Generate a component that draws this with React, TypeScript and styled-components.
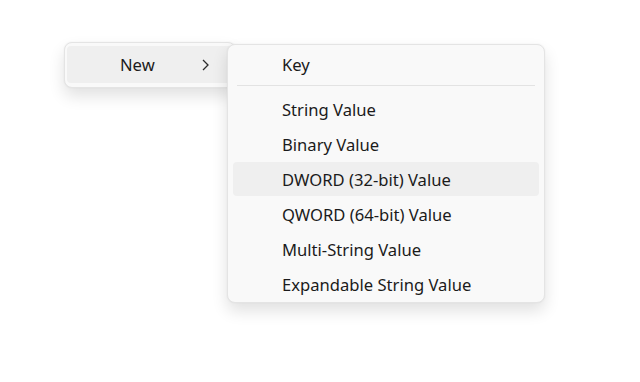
import React from 'react';
import styled, { createGlobalStyle } from 'styled-components';

const GlobalStyle = createGlobalStyle`
  html, body {
    margin: 0;
    padding: 0;
    background: #ffffff;
  }
  body {
    font-family: 'Noto Sans', 'Open Sans', sans-serif;
    color: #1b1b1b;
  }
`;

const Canvas = styled.div`
  width: 640px;
  height: 382px;
  padding: 42px 0 0 64px;
  box-sizing: border-box;
  background: #ffffff;
`;

const Menu = styled.div`
  position: relative;
  box-sizing: border-box;
  background: #f9f9f9;
  border: 1px solid #e4e4e4;
  border-radius: 8px;
  box-shadow: 0 8px 16px rgba(0, 0, 0, 0.12), 0 0 2px rgba(0, 0, 0, 0.06);
`;

const ParentMenu = styled(Menu)`
  width: 172px;
  padding: 3px 2px;
`;

const SubMenu = styled(Menu)`
  position: absolute;
  left: 162px;
  top: 1px;
  width: 318px;
  height: 259px;
  padding: 2px 5px 0;
  z-index: 2;
`;

const Item = styled.div<{ $active?: boolean; $height?: number; $indent?: number }>`
  display: flex;
  align-items: center;
  height: ${({ $height }) => $height ?? 34}px;
  margin-bottom: 1px;
  padding-left: ${({ $indent }) => $indent ?? 49}px;
  border-radius: 4px;
  background: ${({ $active }) => ($active ? '#efefef' : 'transparent')};
  font-size: 16.6px;
  white-space: nowrap;
`;

const Label = styled.span`
  flex: 1;
`;

const Chevron = styled.svg`
  width: 12px;
  height: 12px;
  margin-right: 22px;
`;

const Separator = styled.div`
  height: 1px;
  background: #e3e3e3;
  margin: 4px 4px 6px;
`;

const subItems = [
  'String Value',
  'Binary Value',
  'DWORD (32-bit) Value',
  'QWORD (64-bit) Value',
  'Multi-String Value',
  'Expandable String Value',
];

const App = () => {
  return (
    <Canvas>
      <GlobalStyle />
      <ParentMenu>
        <Item $active $height={37} $indent={53}>
          <Label>New</Label>
          <Chevron viewBox="0 0 12 12">
            <path d="M4 1 L9 6 L4 11" fill="none" stroke="#2b2b2b" strokeWidth="1.3" />
          </Chevron>
        </Item>
        <SubMenu>
          <Item>Key</Item>
          <Separator />
          {subItems.map((label) => (
            <Item key={label} $active={label === 'DWORD (32-bit) Value'}>
              {label}
            </Item>
          ))}
        </SubMenu>
      </ParentMenu>
    </Canvas>
  );
};

export default App;
